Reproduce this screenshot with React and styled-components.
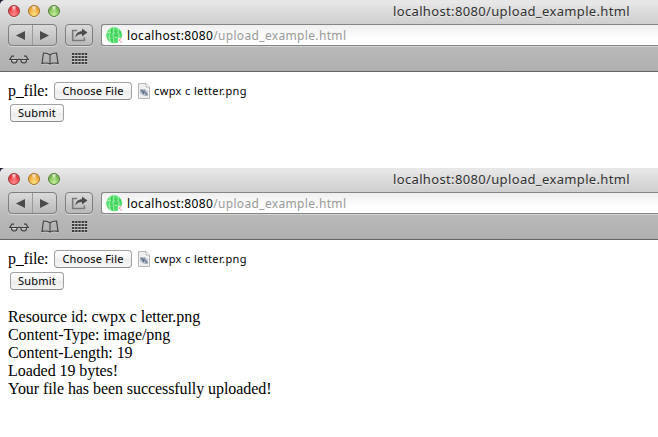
import React from "react";
import styled, { createGlobalStyle } from "styled-components";

const GlobalStyle = createGlobalStyle`
  html, body { margin: 0; background: #fff; overflow: hidden; }
  * { box-sizing: border-box; }
`;

const Page = styled.main`
  width: 658px;
  height: 437px;
  overflow: hidden;
  background: #fff;
`;

const BrowserWindow = styled.section`
  height: ${(p) => p.$height}px;
`;

const Chrome = styled.header`
  height: 72px;
  background: linear-gradient(#e9e9e9 0, #dcdcdc 10px, #cecece 24px, #b8b8b8 47px, #b0b0b0 70px);
  border-bottom: 1px solid #666;
  border-top: 1px solid #e6e6e6;
  border-top-left-radius: 5px;
`;

const Corner = styled.div`
  background: linear-gradient(135deg, #17202c 0, #17202c 3px, #fff 4px);
`;

const TitleBar = styled.div`
  display: flex;
  align-items: center;
  height: 20px;
  padding-left: 8px;
`;

const Lights = styled.div`
  display: flex;
  gap: 8px;
  width: 385px;
  flex: none;
`;

const Light = styled.span`
  width: 12px;
  height: 12px;
  border-radius: 50%;
  border: 1px solid ${(p) => p.$edge};
  background:
    radial-gradient(ellipse at 50% 12%, rgba(255, 255, 255, 0.9) 0, rgba(255, 255, 255, 0) 38%),
    radial-gradient(circle at 50% 85%, ${(p) => p.$glow} 0, ${(p) => p.$color} 65%);
  box-shadow: 0 1px 0 rgba(255, 255, 255, 0.5);
`;

const Title = styled.span`
  margin-top: 1px;
  font: 13px/19px "Noto Sans", sans-serif;
  letter-spacing: 0.35px;
  color: #303030;
  white-space: nowrap;
  text-shadow: 0 1px 0 rgba(255, 255, 255, 0.5);
`;

const Toolbar = styled.div`
  display: flex;
  align-items: center;
  height: 26px;
  margin-top: 1px;
  padding-left: 8px;
`;

const ButtonGroup = styled.div`
  display: flex;
  width: ${(p) => p.$width}px;
  height: 22px;
  margin-right: 8px;
  flex: none;
  border: 1px solid #7f7f7f;
  border-radius: 4px;
  background: linear-gradient(#dadada, #b9b9b9);
  box-shadow: 0 1px 0 rgba(255, 255, 255, 0.45);
`;

const ToolButton = styled.button`
  display: flex;
  flex: 1;
  align-items: center;
  justify-content: center;
  padding: 0;
  border: 0;
  background: none;
  & + & { border-left: 1px solid #9a9a9a; }
`;

const AddressBar = styled.div`
  display: flex;
  align-items: center;
  flex: 1;
  height: 22px;
  padding-left: 4px;
  border: 1px solid #858585;
  border-right: 0;
  border-radius: 3px 0 0 3px;
  background: linear-gradient(#efefef, #fff 14px);
  box-shadow: 0 1px 0 rgba(255, 255, 255, 0.35);
`;

const Address = styled.span`
  margin: 2px 0 0 4px;
  font: 12px/18px "Noto Sans", sans-serif;
  letter-spacing: 0.34px;
  white-space: nowrap;
  color: #999;
`;

const Host = styled.span`
  color: #000;
`;

const BookmarksBar = styled.nav`
  display: flex;
  align-items: center;
  height: 22px;
  padding-left: 9px;
`;

const Icon = styled.svg`
  display: block;
  flex: none;
  margin-left: ${(p) => p.$gap || 0}px;
`;

const Body = styled.div`
  padding: 10px 8px 0;
  color: #000;
  font: 16px/18px "Liberation Serif", serif;
  letter-spacing: -0.07px;
`;

const FileRow = styled.div`
  display: flex;
  align-items: center;
  height: 18px;
`;

const Label = styled.label`
  width: 46px;
  height: 18px;
  letter-spacing: -0.2px;
  white-space: nowrap;
`;

const FormButton = styled.button`
  width: ${(p) => p.$width}px;
  height: 18px;
  padding: 0 0 1px;
  flex: none;
  border: 1px solid #a0a0a0;
  border-bottom-color: #8c8c8c;
  border-radius: 4px;
  background: linear-gradient(#fff, #f4f4f4 45%, #ebebeb 55%, #f7f7f7);
  color: #000;
  font: 11px/15px "Noto Sans", sans-serif;
  letter-spacing: 0.2px;
  white-space: nowrap;
`;

const FileName = styled.span`
  margin-left: 4px;
  font: 11px/18px "Noto Sans", sans-serif;
  letter-spacing: 0.37px;
  white-space: nowrap;
`;

const SubmitRow = styled.div`
  display: flex;
  padding: 4px 0 0 2px;
`;

const Result = styled.div`
  margin-top: 18px;
  white-space: nowrap;
`;

function Arrow({ flip }) {
  return (
    <Icon width="9" height="9" viewBox="0 0 9 9">
      <path d={flip ? "M0 0 9 4.5 0 9Z" : "M9 0 0 4.5 9 9Z"} fill="#4b4b4b" />
    </Icon>
  );
}

function ShareIcon() {
  return (
    <Icon width="17" height="14" viewBox="0 0 17 14">
      <path d="M6 2.500H1.700v10h11.600V9.500" fill="none" stroke="#7b7b7b" strokeWidth="1.600" />
      <path d="M4.500 9.500C4.500 5.400 7.500 3.300 11 3.300V.4L16.500 4.600 11 8.500V6C8 6 6 7 4.500 9.500Z" fill="#4b4b4b" />
    </Icon>
  );
}

function Globe() {
  return (
    <Icon width="17" height="17" viewBox="0 0 17 17">
      <circle cx="8.200" cy="8.300" r="8" fill="#4ddc66" />
      <g fill="none" stroke="#a9f3b3" strokeWidth=".9">
        <path d="M4.500 1.700C2.500 5 3 12 5 15.500M8 .8c-1.500 4-1 12 .3 15.400M11.500 1.500c2 4 2 8 .6 13" />
        <path d="M1 5.500h4M7 6h5M2 11h5M9 10.500h4" strokeDasharray="2 1" />
      </g>
      <path d="M5.800 2v4M10 4v5M6 9v5M14 4v3" stroke="#27b747" strokeWidth=".8" />
      <path d="M12 11.500 17 10v7h-4.500Z" fill="#fff" />
      <path d="m15.500 11-2.500 2 3 2.500" fill="none" stroke="#f08c92" />
    </Icon>
  );
}

function Glasses() {
  const d =
    "M2.500 6.500h5.500v1a2.750 2.500 0 0 1-5.500 0ZM12 6.500h5.500v1a2.750 2.500 0 0 1-5.500 0ZM8 6.800q2-1 4 0M2.500 6.500H.8L3 3.200h2M17.500 6.500h1.700L17 3.200h-2";
  return (
    <Icon width="20" height="12" viewBox="0 0 20 12">
      <path d={d} transform="translate(0 1)" fill="none" stroke="#ddd" strokeOpacity=".6" />
      <path d={d} fill="none" stroke="#404040" strokeWidth="1.200" />
    </Icon>
  );
}

function Book() {
  const d = "M9 3C7 1.200 4 1 2.500 1L1 11.300c3-.5 6-.5 8 .8 2-1.300 5-1.300 8-.8L15.500 1C14 1 11 1.200 9 3ZV12";
  return (
    <Icon $gap={12} width="18" height="14" viewBox="0 0 18 14">
      <path d={d} transform="translate(0 1)" fill="none" stroke="#ddd" strokeOpacity=".6" />
      <path d={d} fill="none" stroke="#444" strokeWidth="1.200" />
    </Icon>
  );
}

function Grid() {
  const cells = [];
  for (let y = 0; y < 4; y++)
    for (let x = 0; x < 5; x++)
      cells.push(<rect key={`${x}-${y}`} x={x * 3.2} y={y * 3} width="2.300" height="2" />);
  return (
    <Icon $gap={13} width="16" height="12" viewBox="0 0 16 12">
      <g fill="#ddd" fillOpacity=".5" transform="translate(0 1)">{cells}</g>
      <g fill="#3c3c3c">{cells}</g>
    </Icon>
  );
}

function Document() {
  return (
    <Icon $gap={6} width="12" height="16" viewBox="0 0 12 16">
      <path d="M.5.5h7.500l3.500 3.500v11.500H.5Z" fill="#f0f0f0" stroke="#b5b5b5" />
      <path d="M8 .5V4h3.500" fill="#fff" stroke="#b5b5b5" />
      <path d="M2 6h5l3 3v4H6L2 10Z" fill="#b3bccb" />
      <path d="m3 7 3 3M6.500 7.500 5 11M7 9l2 3" stroke="#5f6b83" strokeWidth="1.200" />
    </Icon>
  );
}

function Safari({ height, children }) {
  return (
    <BrowserWindow $height={height}>
      <Corner>
        <Chrome>
          <TitleBar>
            <Lights>
              <Light $color="#e33b43" $glow="#ff8f8d" $edge="#9c3a3b" />
              <Light $color="#eda334" $glow="#ffe382" $edge="#a3702c" />
              <Light $color="#76b74d" $glow="#c8f39a" $edge="#55803e" />
            </Lights>
            <Title>localhost:8080/upload_example.html</Title>
          </TitleBar>
          <Toolbar>
            <ButtonGroup $width={49}>
              <ToolButton><Arrow /></ToolButton>
              <ToolButton><Arrow flip /></ToolButton>
            </ButtonGroup>
            <ButtonGroup $width={28}>
              <ToolButton><ShareIcon /></ToolButton>
            </ButtonGroup>
            <AddressBar>
              <Globe />
              <Address><Host>localhost:8080</Host>/upload_example.html</Address>
            </AddressBar>
          </Toolbar>
          <BookmarksBar>
            <Glasses />
            <Book />
            <Grid />
          </BookmarksBar>
        </Chrome>
      </Corner>
      <Body>
        <FileRow>
          <Label>p_file:</Label>
          <FormButton $width={78}>Choose File</FormButton>
          <Document />
          <FileName>cwpx c letter.png</FileName>
        </FileRow>
        <SubmitRow>
          <FormButton $width={54}>Submit</FormButton>
        </SubmitRow>
        {children}
      </Body>
    </BrowserWindow>
  );
}

export default function App() {
  return (
    <Page>
      <GlobalStyle />
      <Safari height={168} />
      <Safari height={269}>
        <Result>
          <div>Resource id: cwpx c letter.png</div>
          <div>Content-Type: image/png</div>
          <div>Content-Length: 19</div>
          <div>Loaded 19 bytes!</div>
          <div>Your file has been successfully uploaded!</div>
        </Result>
      </Safari>
    </Page>
  );
}
